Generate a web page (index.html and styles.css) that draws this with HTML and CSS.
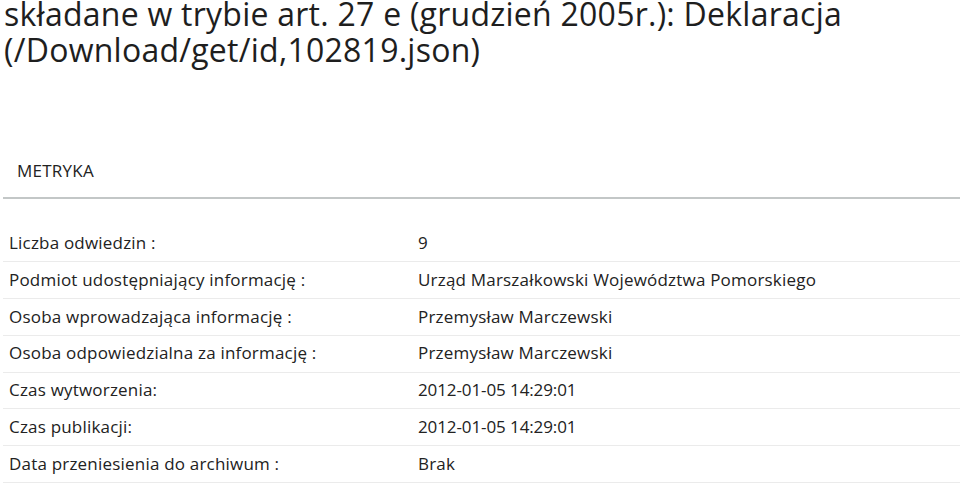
FILE: index.html
```html
<!DOCTYPE html>
<html lang="pl">
<head>
<meta charset="utf-8">
<title>Metryka</title>
<link rel="stylesheet" href="styles.css">
</head>
<body>
<div class="page">
  <h1 class="title">składane w trybie art. 27 e (grudzień 2005r.): Deklaracja (/Download/get/id,102819.json)</h1>
  <div class="section-head">METRYKA</div>
  <div class="meta">
    <div class="row"><div class="label">Liczba odwiedzin :</div><div class="value">9</div></div>
    <div class="row"><div class="label">Podmiot udostępniający informację :</div><div class="value">Urząd Marszałkowski Województwa Pomorskiego</div></div>
    <div class="row"><div class="label">Osoba wprowadzająca informację :</div><div class="value">Przemysław Marczewski</div></div>
    <div class="row"><div class="label">Osoba odpowiedzialna za informację :</div><div class="value">Przemysław Marczewski</div></div>
    <div class="row"><div class="label">Czas wytworzenia:</div><div class="value num">2012-01-05 14:29:01</div></div>
    <div class="row"><div class="label">Czas publikacji:</div><div class="value num">2012-01-05 14:29:01</div></div>
    <div class="row"><div class="label">Data przeniesienia do archiwum :</div><div class="value">Brak</div></div>
  </div>
</div>
</body>
</html>
```
FILE: styles.css
```css
html, body {
  margin: 0;
  padding: 0;
  background: #fff;
}
body {
  font-family: "Open Sans", "DejaVu Sans", sans-serif;
  color: #222;
  overflow: hidden;
}
.page {
  padding-left: 3px;
}
.title {
  margin: -3.7px 0 0 1px;
  width: 900px;
  font-size: 32px;
  line-height: 36px;
  letter-spacing: 0.25px;
  font-weight: 400;
  color: #1e1e1e;
}
.section-head {
  margin-top: 91.2px;
  padding: 0 0 15.2px 14px;
  font-size: 17px;
  line-height: 22.8px;
  letter-spacing: 0.25px;
  border-bottom: 2px solid #c3c7c7;
}
.meta {
  margin-top: 26px;
}
.row {
  display: grid;
  grid-template-columns: 409px 1fr;
  border-bottom: 1px solid #ebebeb;
  font-size: 17px;
  line-height: 22.8px;
  letter-spacing: 0.2px;
}
.label, .value {
  padding: 6.5px 6px;
}
.num {
  letter-spacing: -0.1px;
}
```
